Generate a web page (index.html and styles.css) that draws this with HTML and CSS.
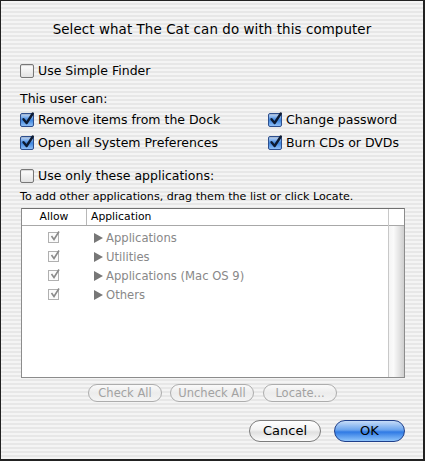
FILE: index.html
```html
<!DOCTYPE html>
<html>
<head>
<meta charset="utf-8">
<link rel="stylesheet" href="styles.css">
</head>
<body>
<div class="win">
  <div class="title">Select what The Cat can do with this computer</div>

  <div class="row r-simple">
    <span class="cb"></span><span class="lbl">Use Simple Finder</span>
  </div>

  <div class="row r-can"><span class="lbl">This user can:</span></div>

  <div class="grid2">
    <div class="row"><span class="cb on"><svg viewBox="0 0 14 14"><path d="M2.5 7.2 L5.6 11 L11.8 1.5" /></svg></span><span class="lbl">Remove items from the Dock</span></div>
    <div class="row"><span class="cb on"><svg viewBox="0 0 14 14"><path d="M2.5 7.2 L5.6 11 L11.8 1.5" /></svg></span><span class="lbl">Change password</span></div>
    <div class="row"><span class="cb on"><svg viewBox="0 0 14 14"><path d="M2.5 7.2 L5.6 11 L11.8 1.5" /></svg></span><span class="lbl">Open all System Preferences</span></div>
    <div class="row"><span class="cb on"><svg viewBox="0 0 14 14"><path d="M2.5 7.2 L5.6 11 L11.8 1.5" /></svg></span><span class="lbl">Burn CDs or DVDs</span></div>
  </div>

  <div class="row r-only">
    <span class="cb"></span><span class="lbl">Use only these applications:</span>
  </div>

  <div class="info">To add other applications, drag them the list or click Locate.</div>

  <div class="table">
    <div class="main">
      <div class="thead">
        <div class="th allow">Allow</div>
        <div class="th app">Application</div>
      </div>
      <div class="tbody">
        <div class="tr"><span class="dcb"><svg viewBox="0 0 12 12"><path d="M2.5 6 L5 9.5 L10 1.5"/></svg></span><span class="tri"></span><span class="name">Applications</span></div>
        <div class="tr"><span class="dcb"><svg viewBox="0 0 12 12"><path d="M2.5 6 L5 9.5 L10 1.5"/></svg></span><span class="tri"></span><span class="name">Utilities</span></div>
        <div class="tr"><span class="dcb"><svg viewBox="0 0 12 12"><path d="M2.5 6 L5 9.5 L10 1.5"/></svg></span><span class="tri"></span><span class="name">Applications (Mac OS 9)</span></div>
        <div class="tr"><span class="dcb"><svg viewBox="0 0 12 12"><path d="M2.5 6 L5 9.5 L10 1.5"/></svg></span><span class="tri"></span><span class="name">Others</span></div>
      </div>
    </div>
    <div class="scroll">
      <div class="scorner"></div>
      <div class="strack"></div>
    </div>
  </div>

  <div class="small-btns">
    <span class="sbtn b1">Check All</span>
    <span class="sbtn b2">Uncheck All</span>
    <span class="sbtn b3">Locate...</span>
  </div>

  <div class="dlg-btns">
    <span class="btn cancel">Cancel</span>
    <span class="btn ok">OK</span>
  </div>
</div>
</body>
</html>
```

FILE: styles.css
```css
html, body {
  margin: 0;
  padding: 0;
}
body {
  font-family: "DejaVu Sans", "Liberation Sans", sans-serif;
  color: #000;
}
.win {
  width: 425px;
  height: 461px;
  box-sizing: border-box;
  border-top: 1px solid #222;
  border-left: 1px solid #222;
  border-right: 2px solid #222;
  border-bottom: 2px solid #222;
  background: repeating-linear-gradient(to bottom, #f4f4f4 0px, #f4f4f4 2px, #e7e7e7 2px, #e7e7e7 4px);
  padding: 0 19px;
  overflow: hidden;
}
.title {
  margin-top: 19px;
  height: 20px;
  line-height: 20px;
  text-align: center;
  font-size: 13.4px;
  letter-spacing: 0.1px;
}
.row {
  display: flex;
  align-items: center;
  height: 23px;
  font-size: 12.5px;
}
.r-simple { margin-top: 19px; }
.r-can { margin-top: 6px; height: 20px; }
.lbl { white-space: nowrap; }
.cb {
  width: 14px;
  height: 14px;
  box-sizing: border-box;
  border: 1px solid #777;
  border-radius: 2px;
  background: linear-gradient(#fefefe, #e2e2e2);
  margin-right: 4px;
  flex: none;
  position: relative;
  box-shadow: inset 0 1px 1px rgba(0,0,0,0.15);
}
.cb.on {
  background: linear-gradient(#c8dcf7, #3d86e0 50%, #8ebdf5);
  border-color: #2d4f8e;
}
.cb svg {
  position: absolute;
  left: 0;
  top: -2px;
  width: 14px;
  height: 14px;
  overflow: visible;
}
.cb svg path {
  fill: none;
  stroke: #0d1b33;
  stroke-width: 2.4;
  stroke-linecap: round;
  stroke-linejoin: round;
}
.grid2 {
  display: grid;
  grid-template-columns: 248px 1fr;
  row-gap: 0;
}
.r-only { margin-top: 10px; }
.info {
  height: 20px;
  line-height: 20px;
  font-size: 11.1px;
  white-space: nowrap;
}
.table {
  margin-top: 1px;
  margin-left: 1px;
  width: 384px;
  height: 170px;
  box-sizing: border-box;
  border: 1px solid #8c8c8c;
  border-top-color: #707070;
  background: #fff;
  display: flex;
}
.main {
  flex: 1;
}
.thead {
  display: flex;
  height: 16px;
  border-bottom: 1px solid #a8a8a8;
  font-size: 10.8px;
  line-height: 16px;
}
.th.allow {
  width: 64px;
  text-align: center;
  border-right: 1px solid #b8b8b8;
}
.th.app {
  padding-left: 4px;
  flex: 1;
}
.tbody {
  padding-top: 2px;
}
.tr {
  display: flex;
  align-items: center;
  height: 19px;
  color: #888;
  font-size: 11.6px;
}
.dcb {
  width: 11px;
  height: 11px;
  margin-left: 26px;
  box-sizing: border-box;
  border: 1px solid #b0b0b0;
  position: relative;
  background: #fbfbfb;
}
.dcb svg {
  position: absolute;
  left: 0;
  top: -3px;
  width: 12px;
  height: 12px;
  overflow: visible;
}
.dcb svg path {
  fill: none;
  stroke: #8a8a8a;
  stroke-width: 1.6;
}
.tri {
  width: 0;
  height: 0;
  border-top: 5px solid transparent;
  border-bottom: 5px solid transparent;
  border-left: 9px solid #777;
  margin-left: 35px;
  margin-right: 3px;
}
.name { white-space: nowrap; }
.scroll {
  width: 15px;
  display: flex;
  flex-direction: column;
  border-left: 1px solid #c8c8c8;
}
.scorner {
  height: 16px;
  border-bottom: 1px solid #a8a8a8;
  background: #fff;
}
.strack {
  flex: 1;
  background: linear-gradient(to right, #f4f4f4, #fafafa 30%, #e2e2e2 70%, #cfcfcf);
}
.small-btns {
  display: flex;
  margin-top: 6px;
  padding-left: 68px;
  gap: 8px;
  height: 18px;
}
.sbtn {
  box-sizing: border-box;
  height: 18px;
  border: 1px solid #adadad;
  border-radius: 9px;
  background: linear-gradient(#fafafa, #ececec 50%, #f4f4f4);
  color: #a2a2a2;
  font-size: 11.5px;
  line-height: 16px;
  text-align: center;
}
.b1 { width: 74px; }
.b2 { width: 84px; }
.b3 { width: 74px; margin-left: 1px; }
.dlg-btns {
  display: flex;
  justify-content: flex-end;
  gap: 13px;
  margin-top: 18px;
}
.btn {
  box-sizing: border-box;
  height: 22px;
  border-radius: 11px;
  font-size: 13px;
  line-height: 20px;
  text-align: center;
}
.cancel {
  width: 72px;
  border: 1px solid #7c7c7c;
  background: linear-gradient(#ffffff, #f2f2f2 45%, #e0e0e0 55%, #fbfbfb);
}
.ok {
  width: 71px;
  border: 1px solid #1f3f8a;
  background: linear-gradient(#c6dcf8, #6aa4ee 45%, #2f7ae4 55%, #8ec4fb);
  margin-right: -1px;
}
```
